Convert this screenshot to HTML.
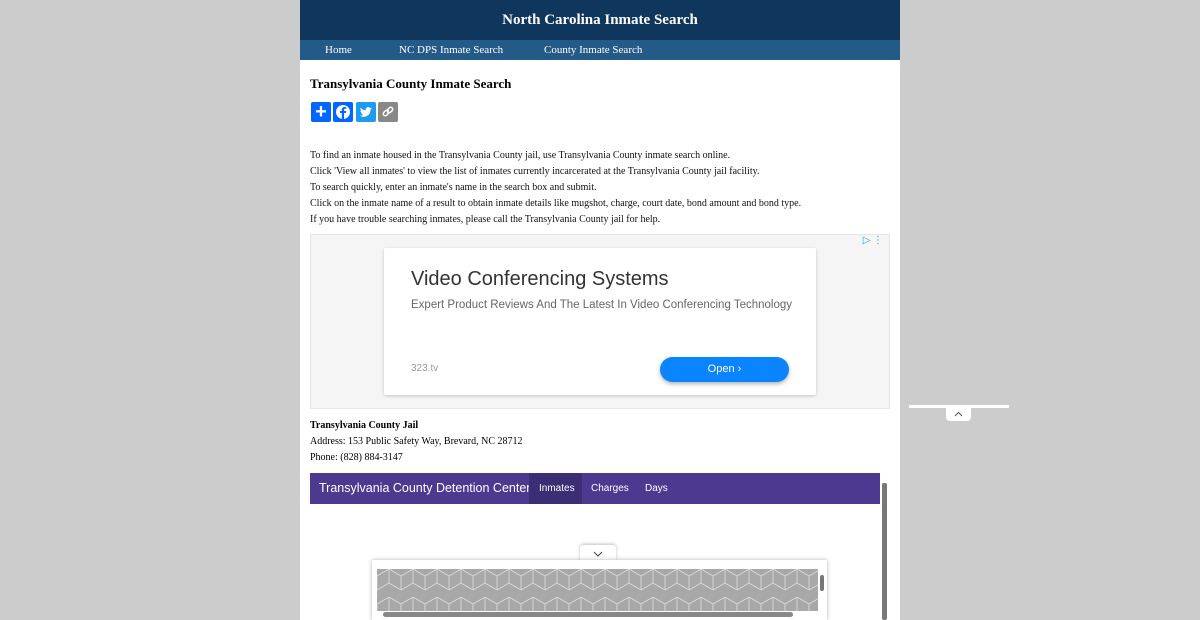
<!DOCTYPE html>
<html><head><style>
body{margin:0;background:#cccccc;font-family:"Liberation Serif",serif;}
.page{position:absolute;left:300px;top:0;width:600px;height:620px;background:#fff;overflow:hidden}
.hdr{height:40px;background:#0f365c;color:#fff;font-weight:bold;font-size:15px;text-align:center;line-height:41px}
.nav{height:20px;background:#245a88;color:#fff;font-size:11px;line-height:21px;position:relative}
.nav span{position:absolute;top:0}
h1{position:absolute;left:10px;top:76px;margin:0;font-size:13px}
.sh{position:absolute;top:102px;width:20px;height:20px;border-radius:2px}
.txt{position:absolute;left:10px;top:148px;font-size:10px;line-height:16px;color:#111}
.ad{position:absolute;left:10px;top:234px;width:578px;height:173px;background:#f5f5f5;border:1px solid #e6e6e6}
.card{position:absolute;left:73px;top:13px;width:432px;height:147px;background:#fff;box-shadow:0 1px 3px rgba(0,0,0,.2);border-radius:2px;font-family:"Liberation Sans",sans-serif}
.jail{position:absolute;left:10px;top:418px;font-size:10px;line-height:16px}
.bar{position:absolute;left:10px;top:473px;width:570px;height:31px;background:#4b3a8f;color:#fff;font-family:"Liberation Sans",sans-serif}
</style></head><body>
<div class="page">
<div class="hdr">North Carolina Inmate Search</div>
<div class="nav"><span style="left:25px">Home</span><span style="left:99px">NC DPS Inmate Search</span><span style="left:244px">County Inmate Search</span></div>
<h1>Transylvania County Inmate Search</h1>
<div class="sh" style="left:11px;background:#0166ff;color:#fff;font:bold 20px/20px 'Liberation Sans';text-align:center">+</div>
<div class="sh" style="left:33px;background:#0166ff"><svg width="20" height="20"><circle cx="10" cy="10" r="7" fill="#fff"/><path d="M11 17v-6h2l.3-2H11V7.8c0-.6.2-1 1-1h1.3V5.2c-.3 0-1-.1-1.8-.1-1.8 0-2.7 1-2.7 2.800V9H7v2h1.8v6z" fill="#0166ff"/></svg></div>
<div class="sh" style="left:56px;background:#1d9bf0"><svg width="20" height="20"><path d="M16 6.5c-.5.2-1 .3-1.4.4.5-.3.9-.8 1.1-1.4-.5.3-1 .5-1.6.6a2.4 2.4 0 0 0-4.2 2.2A6.8 6.8 0 0 1 4.8 5.7a2.4 2.4 0 0 0 .7 3.2c-.4 0-.8-.1-1.1-.3 0 1.200.8 2.200 1.900 2.400-.4.1-.7.1-1.1 0 .3 1 1.200 1.700 2.300 1.700A4.800 4.800 0 0 1 4 13.700 6.800 6.800 0 0 0 14.500 7.600c.6-.3 1.100-.7 1.500-1.100z" fill="#fff"/></svg></div>
<div class="sh" style="left:78px;background:#888"><svg width="20" height="20" fill="none" stroke="#fff" stroke-width="1.5"><rect x="5" y="9" width="6" height="4" rx="2" transform="rotate(-45 8 11)"/><rect x="9" y="6" width="6" height="4" rx="2" transform="rotate(-45 12 8)"/></svg></div>
<div class="txt">To find an inmate housed in the Transylvania County jail, use Transylvania County inmate search online.<br>Click 'View all inmates' to view the list of inmates currently incarcerated at the Transylvania County jail facility.<br>To search quickly, enter an inmate's name in the search box and submit.<br>Click on the inmate name of a result to obtain inmate details like mugshot, charge, court date, bond amount and bond type.<br>If you have trouble searching inmates, please call the Transylvania County jail for help.</div>
<div class="ad"><div style="position:absolute;right:6px;top:0;color:#1aa0e0;font-size:10px">▷ ⋮</div>
<div class="card">
<div style="position:absolute;left:27px;top:20px;font-size:20px;color:#333">Video Conferencing Systems</div>
<div style="position:absolute;left:27px;top:51px;font-size:11.5px;color:#666;white-space:nowrap">Expert Product Reviews And The Latest In Video Conferencing Technology</div>
<div style="position:absolute;left:27px;top:115px;font-size:10px;color:#999">323.tv</div>
<div style="position:absolute;left:276px;top:109px;width:129px;height:25px;border-radius:13px;background:#0a84ff;color:#fff;font-size:11px;text-align:center;line-height:25px;box-shadow:0 2px 4px rgba(0,0,0,.3)">Open ›</div>
</div></div>
<div class="jail"><b>Transylvania County Jail</b><br>Address: 153 Public Safety Way, Brevard, NC 28712<br>Phone: (828) 884-3147</div>
<div class="bar"><span style="position:absolute;left:9px;top:8px;font-size:12.5px;white-space:nowrap">Transylvania County Detention Center</span>
<span style="position:absolute;left:219px;top:0;width:53px;height:31px;background:#3b2e75"></span>
<span style="position:absolute;left:229px;top:10px;font-size:10px">Inmates</span>
<span style="position:absolute;left:281px;top:10px;font-size:10px">Charges</span>
<span style="position:absolute;left:335px;top:10px;font-size:10px">Days</span></div>
<div style="position:absolute;left:582px;top:483px;width:5px;height:137px;background:#777;border-radius:2px"></div>
<div style="position:absolute;left:280px;top:545px;width:36px;height:16px;background:#fff;box-shadow:0 -1px 3px rgba(0,0,0,.25);border-radius:3px 3px 0 0"><svg width="36" height="16"><path d="M14 7l4 4 4-4" stroke="#444" fill="none"/></svg></div>
<div style="position:absolute;left:72px;top:560px;width:455px;height:60px;background:#fff;box-shadow:0 0 4px rgba(0,0,0,.3)"></div>
<div style="position:absolute;left:77px;top:569px;width:441px;height:42px;background:#a8a8a8"><svg width="441" height="42"><defs><pattern id="p" width="24" height="28" patternUnits="userSpaceOnUse"><path d="M0 7l12-7 12 7M12 0v14M0 21l12-7 12 7M0 7v14M24 7v14" stroke="#ddd" fill="none" stroke-width=".8"/></pattern></defs><rect width="441" height="42" fill="url(#p)"/></svg></div>
<div style="position:absolute;left:83px;top:612px;width:410px;height:5px;background:#888;border-radius:3px"></div>
<div style="position:absolute;left:520px;top:575px;width:4px;height:16px;background:#777;border-radius:2px"></div>
</div>
<div style="position:absolute;left:909px;top:405px;width:100px;height:3px;background:#fff"></div>
<div style="position:absolute;left:946px;top:407px;width:25px;height:14px;background:#fff;border-radius:0 0 4px 4px"><svg width="25" height="14"><path d="M9 9l3.5-3.5 3.5 3.5" stroke="#555" fill="none"/></svg></div>
</body></html>
